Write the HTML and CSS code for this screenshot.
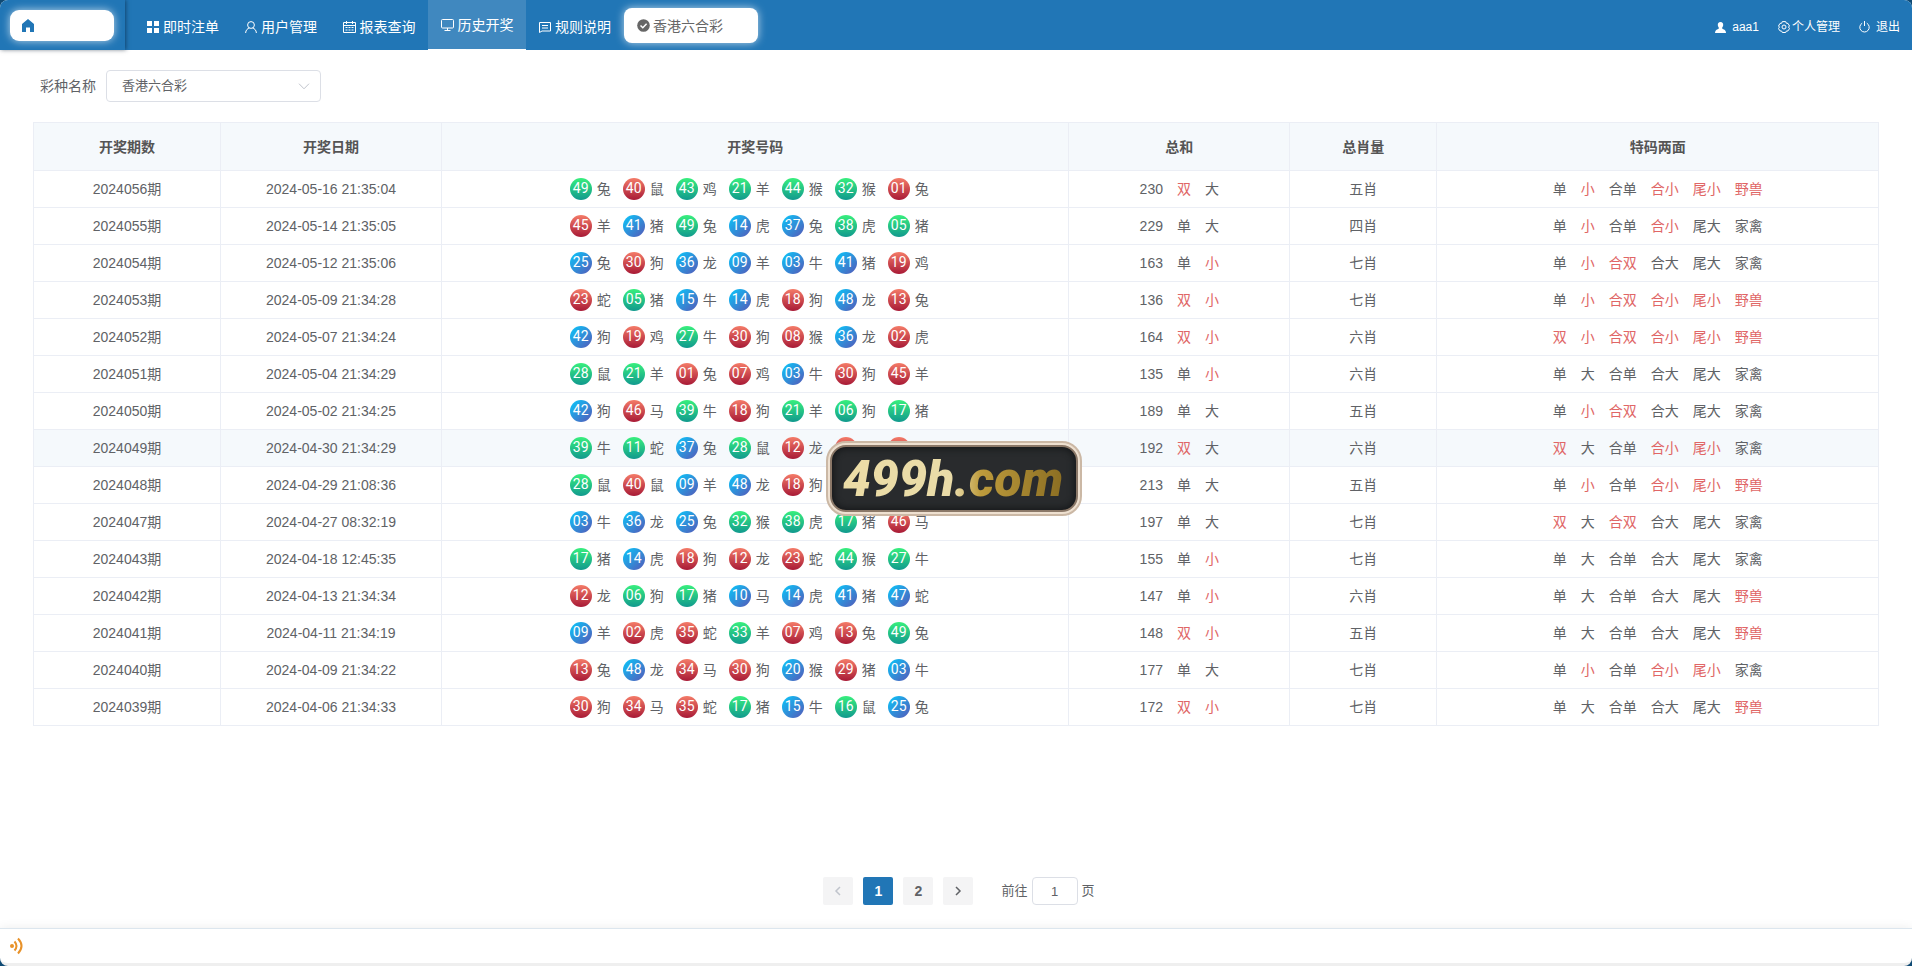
FILE: index.html
```
<!DOCTYPE html>
<html lang="zh-CN">
<head>
<meta charset="utf-8">
<title>历史开奖</title>
<link rel="stylesheet" href="styles.css">
</head>
<body>
<div class="app">
<header class="topbar">
  <div class="brand"><a class="home" href="#" aria-label="home"><svg width="14" height="14" viewBox="0 0 14 14"><path fill="#2176b6" d="M7 0 13 5V13H9V8.500H5V13H1V5Z"/></svg></a></div>
  <nav class="nav">
    <a href="#"><svg width="12" height="12" viewBox="0 0 12 12" fill="#fff"><path d="M0 0h5v5H0zM7 0h5v5H7zM0 7h5v5H0zM7 7h5v5H7z"/></svg>即时注单</a>
    <a href="#"><svg width="12" height="12" viewBox="0 0 12 12" fill="none" stroke="#fff"><circle cx="6" cy="4" r="3.400"/><path d="M.6 12C.8 9 2.600 7.400 4.500 7M11.400 12C11.200 9 9.400 7.400 7.500 7"/></svg>用户管理</a>
    <a href="#"><svg width="13" height="12" viewBox="0 0 13 12" fill="none" stroke="#fff"><path d="M.5 1.500h12v10H.5zM.5 4.500h12M3.500 0v3M9.500 0v3"/><path d="M2.500 6.500h8M2.500 9h8" stroke-dasharray="2 1"/></svg>报表查询</a>
    <a href="#" class="active"><svg width="13" height="12" viewBox="0 0 13 12" fill="none" stroke="#fff"><rect x=".5" y=".5" width="12" height="8.500" rx="1"/><path d="M6.500 9v2M3.500 11.500h6"/></svg>历史开奖</a>
    <a href="#"><svg width="12" height="12" viewBox="0 0 12 12" fill="none" stroke="#fff"><path d="M.5 1.500h11v8.500H3L.5 11.500zM3 4.500h6M3 7h6"/></svg>规则说明</a>
  </nav>
  <button class="game" type="button"><svg width="13" height="13" viewBox="0 0 13 13"><circle cx="6.500" cy="6.500" r="6.300" fill="#666"/><path d="M3.500 6.500 5.800 8.700 9.600 4.800" fill="none" stroke="#fff" stroke-width="1.500"/></svg>香港六合彩</button>
  <div class="account">
    <a href="#"><svg width="11" height="11" viewBox="0 0 11 11" fill="#fff"><path d="M5.500 0C7.500 0 8.300 1.400 8.200 3 8.100 4.500 7.400 5.400 7 6 7 7.500 11 7 11 11H0C0 7 4 7.500 4 6 3.600 5.400 2.900 4.500 2.800 3 2.700 1.400 3.500 0 5.500 0Z"/></svg><span>aaa1</span></a>
    <a href="#" class="tight"><svg width="12" height="12" viewBox="0 0 12 12" fill="none" stroke="#fff"><path d="M4.300.6h3.400l.6 1.600 1.700.2 1.500 2.600-1 1 1 1.600-1.500 2.300-1.700.2-.6 1.400H4.300l-.6-1.400L2 9.900.5 7.600l1-1.600-1-1L2 2.400l1.700-.2z"/><circle cx="6" cy="6" r="2"/></svg><span>个人管理</span></a>
    <a href="#"><svg width="11" height="12" viewBox="0 0 11 12" fill="none" stroke="#fff"><path d="M3.200 2.200a4.700 4.700 0 1 0 4.600 0M5.500 0v5"/></svg><span>退出</span></a>
  </div>
</header>

<main class="content">
  <form class="filter">
    <label for="lottery">彩种名称</label>
    <span class="picker"><select id="lottery"><option>香港六合彩</option></select><svg width="12" height="7" viewBox="0 0 12 7" fill="none" stroke="#c0c4cc"><path d="M1 .7 6 5.800 11 .7"/></svg></span>
  </form>

  <table class="draws">
    <colgroup><col class="c-issue"><col class="c-date"><col class="c-balls"><col class="c-sum"><col class="c-zodiac"><col class="c-special"></colgroup>
    <thead><tr><th>开奖期数</th><th>开奖日期</th><th>开奖号码</th><th>总和</th><th>总肖量</th><th>特码两面</th></tr></thead>
    <tbody>
<tr><td>2024056期</td><td>2024-05-16 21:35:04</td><td><ul class="balls"><li><b class="g">49</b>兔</li><li><b class="r">40</b>鼠</li><li><b class="g">43</b>鸡</li><li><b class="g">21</b>羊</li><li><b class="g">44</b>猴</li><li><b class="g">32</b>猴</li><li><b class="r">01</b>兔</li></ul></td><td><p class="marks"><span>230</span><em>双</em><span>大</span></p></td><td>五肖</td><td><p class="marks"><span>单</span><em>小</em><span>合单</span><em>合小</em><em>尾小</em><em>野兽</em></p></td></tr>
<tr><td>2024055期</td><td>2024-05-14 21:35:05</td><td><ul class="balls"><li><b class="r">45</b>羊</li><li><b class="b">41</b>猪</li><li><b class="g">49</b>兔</li><li><b class="b">14</b>虎</li><li><b class="b">37</b>兔</li><li><b class="g">38</b>虎</li><li><b class="g">05</b>猪</li></ul></td><td><p class="marks"><span>229</span><span>单</span><span>大</span></p></td><td>四肖</td><td><p class="marks"><span>单</span><em>小</em><span>合单</span><em>合小</em><span>尾大</span><span>家禽</span></p></td></tr>
<tr><td>2024054期</td><td>2024-05-12 21:35:06</td><td><ul class="balls"><li><b class="b">25</b>兔</li><li><b class="r">30</b>狗</li><li><b class="b">36</b>龙</li><li><b class="b">09</b>羊</li><li><b class="b">03</b>牛</li><li><b class="b">41</b>猪</li><li><b class="r">19</b>鸡</li></ul></td><td><p class="marks"><span>163</span><span>单</span><em>小</em></p></td><td>七肖</td><td><p class="marks"><span>单</span><em>小</em><em>合双</em><span>合大</span><span>尾大</span><span>家禽</span></p></td></tr>
<tr><td>2024053期</td><td>2024-05-09 21:34:28</td><td><ul class="balls"><li><b class="r">23</b>蛇</li><li><b class="g">05</b>猪</li><li><b class="b">15</b>牛</li><li><b class="b">14</b>虎</li><li><b class="r">18</b>狗</li><li><b class="b">48</b>龙</li><li><b class="r">13</b>兔</li></ul></td><td><p class="marks"><span>136</span><em>双</em><em>小</em></p></td><td>七肖</td><td><p class="marks"><span>单</span><em>小</em><em>合双</em><em>合小</em><em>尾小</em><em>野兽</em></p></td></tr>
<tr><td>2024052期</td><td>2024-05-07 21:34:24</td><td><ul class="balls"><li><b class="b">42</b>狗</li><li><b class="r">19</b>鸡</li><li><b class="g">27</b>牛</li><li><b class="r">30</b>狗</li><li><b class="r">08</b>猴</li><li><b class="b">36</b>龙</li><li><b class="r">02</b>虎</li></ul></td><td><p class="marks"><span>164</span><em>双</em><em>小</em></p></td><td>六肖</td><td><p class="marks"><em>双</em><em>小</em><em>合双</em><em>合小</em><em>尾小</em><em>野兽</em></p></td></tr>
<tr><td>2024051期</td><td>2024-05-04 21:34:29</td><td><ul class="balls"><li><b class="g">28</b>鼠</li><li><b class="g">21</b>羊</li><li><b class="r">01</b>兔</li><li><b class="r">07</b>鸡</li><li><b class="b">03</b>牛</li><li><b class="r">30</b>狗</li><li><b class="r">45</b>羊</li></ul></td><td><p class="marks"><span>135</span><span>单</span><em>小</em></p></td><td>六肖</td><td><p class="marks"><span>单</span><span>大</span><span>合单</span><span>合大</span><span>尾大</span><span>家禽</span></p></td></tr>
<tr><td>2024050期</td><td>2024-05-02 21:34:25</td><td><ul class="balls"><li><b class="b">42</b>狗</li><li><b class="r">46</b>马</li><li><b class="g">39</b>牛</li><li><b class="r">18</b>狗</li><li><b class="g">21</b>羊</li><li><b class="g">06</b>狗</li><li><b class="g">17</b>猪</li></ul></td><td><p class="marks"><span>189</span><span>单</span><span>大</span></p></td><td>五肖</td><td><p class="marks"><span>单</span><em>小</em><em>合双</em><span>合大</span><span>尾大</span><span>家禽</span></p></td></tr>
<tr class="hover"><td>2024049期</td><td>2024-04-30 21:34:29</td><td><ul class="balls"><li><b class="g">39</b>牛</li><li><b class="g">11</b>蛇</li><li><b class="b">37</b>兔</li><li><b class="g">28</b>鼠</li><li><b class="r">12</b>龙</li><li><b class="r"></b></li><li><b class="r"></b></li></ul></td><td><p class="marks"><span>192</span><em>双</em><span>大</span></p></td><td>六肖</td><td><p class="marks"><em>双</em><span>大</span><span>合单</span><em>合小</em><em>尾小</em><span>家禽</span></p></td></tr>
<tr><td>2024048期</td><td>2024-04-29 21:08:36</td><td><ul class="balls"><li><b class="g">28</b>鼠</li><li><b class="r">40</b>鼠</li><li><b class="b">09</b>羊</li><li><b class="b">48</b>龙</li><li><b class="r">18</b>狗</li><li></li><li></li></ul></td><td><p class="marks"><span>213</span><span>单</span><span>大</span></p></td><td>五肖</td><td><p class="marks"><span>单</span><em>小</em><span>合单</span><em>合小</em><em>尾小</em><em>野兽</em></p></td></tr>
<tr><td>2024047期</td><td>2024-04-27 08:32:19</td><td><ul class="balls"><li><b class="b">03</b>牛</li><li><b class="b">36</b>龙</li><li><b class="b">25</b>兔</li><li><b class="g">32</b>猴</li><li><b class="g">38</b>虎</li><li><b class="g">17</b>猪</li><li><b class="r">46</b>马</li></ul></td><td><p class="marks"><span>197</span><span>单</span><span>大</span></p></td><td>七肖</td><td><p class="marks"><em>双</em><span>大</span><em>合双</em><span>合大</span><span>尾大</span><span>家禽</span></p></td></tr>
<tr><td>2024043期</td><td>2024-04-18 12:45:35</td><td><ul class="balls"><li><b class="g">17</b>猪</li><li><b class="b">14</b>虎</li><li><b class="r">18</b>狗</li><li><b class="r">12</b>龙</li><li><b class="r">23</b>蛇</li><li><b class="g">44</b>猴</li><li><b class="g">27</b>牛</li></ul></td><td><p class="marks"><span>155</span><span>单</span><em>小</em></p></td><td>七肖</td><td><p class="marks"><span>单</span><span>大</span><span>合单</span><span>合大</span><span>尾大</span><span>家禽</span></p></td></tr>
<tr><td>2024042期</td><td>2024-04-13 21:34:34</td><td><ul class="balls"><li><b class="r">12</b>龙</li><li><b class="g">06</b>狗</li><li><b class="g">17</b>猪</li><li><b class="b">10</b>马</li><li><b class="b">14</b>虎</li><li><b class="b">41</b>猪</li><li><b class="b">47</b>蛇</li></ul></td><td><p class="marks"><span>147</span><span>单</span><em>小</em></p></td><td>六肖</td><td><p class="marks"><span>单</span><span>大</span><span>合单</span><span>合大</span><span>尾大</span><em>野兽</em></p></td></tr>
<tr><td>2024041期</td><td>2024-04-11 21:34:19</td><td><ul class="balls"><li><b class="b">09</b>羊</li><li><b class="r">02</b>虎</li><li><b class="r">35</b>蛇</li><li><b class="g">33</b>羊</li><li><b class="r">07</b>鸡</li><li><b class="r">13</b>兔</li><li><b class="g">49</b>兔</li></ul></td><td><p class="marks"><span>148</span><em>双</em><em>小</em></p></td><td>五肖</td><td><p class="marks"><span>单</span><span>大</span><span>合单</span><span>合大</span><span>尾大</span><em>野兽</em></p></td></tr>
<tr><td>2024040期</td><td>2024-04-09 21:34:22</td><td><ul class="balls"><li><b class="r">13</b>兔</li><li><b class="b">48</b>龙</li><li><b class="r">34</b>马</li><li><b class="r">30</b>狗</li><li><b class="b">20</b>猴</li><li><b class="r">29</b>猪</li><li><b class="b">03</b>牛</li></ul></td><td><p class="marks"><span>177</span><span>单</span><span>大</span></p></td><td>七肖</td><td><p class="marks"><span>单</span><em>小</em><span>合单</span><em>合小</em><em>尾小</em><span>家禽</span></p></td></tr>
<tr><td>2024039期</td><td>2024-04-06 21:34:33</td><td><ul class="balls"><li><b class="r">30</b>狗</li><li><b class="r">34</b>马</li><li><b class="r">35</b>蛇</li><li><b class="g">17</b>猪</li><li><b class="b">15</b>牛</li><li><b class="g">16</b>鼠</li><li><b class="b">25</b>兔</li></ul></td><td><p class="marks"><span>172</span><em>双</em><em>小</em></p></td><td>七肖</td><td><p class="marks"><span>单</span><span>大</span><span>合单</span><span>合大</span><span>尾大</span><em>野兽</em></p></td></tr>
    </tbody>
  </table>

  <div class="pager">
    <button type="button" aria-label="上一页" disabled><svg width="8" height="10" viewBox="0 0 8 10" fill="none" stroke="#c0c4cc" stroke-width="1.500"><path d="M6 1 2 5l4 4"/></svg></button>
    <button type="button" class="current">1</button>
    <button type="button">2</button>
    <button type="button" aria-label="下一页"><svg width="8" height="10" viewBox="0 0 8 10" fill="none" stroke="#606266" stroke-width="1.500"><path d="M2 1 6 5 2 9"/></svg></button>
    <label class="jump">前往<input type="text" value="1">页</label>
  </div>
</main>

<footer class="notice"><svg width="15" height="18" viewBox="0 0 15 18" fill="none" stroke="#e8922a" stroke-width="2"><circle cx="3" cy="9" r="2" fill="#e8922a" stroke="none"/><path d="M5.500 4.500Q9.500 9 5.500 13.500M9 1.500Q16 9 9 16.500"/></svg></footer>
<div class="stamp"><span>499h.com</span></div>
</div>
</body>
</html>
```
FILE: styles.css
```
* { box-sizing: border-box; }
body {
  margin: 0;
  background: #0f4a74;
  color: #606266;
  font: 14px/20px "Liberation Sans", "Noto Sans CJK SC", sans-serif;
}
a { color: inherit; text-decoration: none; }
svg { flex: none; display: block; }
button, input, select { font: inherit; color: inherit; }

.app {
  position: relative;
  display: flex;
  flex-direction: column;
  min-height: 100vh;
  background: #fff;
  border-bottom: 3px solid #efefef;
  border-radius: 8px;
  overflow: hidden;
}

.topbar {
  display: flex;
  align-items: flex-start;
  height: 50px;
  background: #2176b6;
  color: #fff;
}
.brand {
  width: 125px;
  height: 50px;
  padding: 10px;
  box-shadow: 1px 0 4px rgba(0, 21, 41, .5);
}
.home {
  display: flex;
  align-items: center;
  width: 104px;
  height: 31px;
  padding-left: 11px;
  background: #fff;
  border-radius: 9px;
  box-shadow: 0 0 8px rgba(255, 255, 255, .7);
}
.nav { display: flex; margin-left: 9px; }
.nav a {
  display: flex;
  align-items: center;
  justify-content: center;
  gap: 4px;
  width: 98px;
  height: 49px;
  padding-top: 4px;
}
.nav .active { padding: 0; background: #4088bf; box-shadow: 0 1px #fff; }
.game {
  display: flex;
  align-items: center;
  gap: 3px;
  width: 134px;
  height: 35px;
  margin-top: 8px;
  padding: 0 13px;
  border: 0;
  border-radius: 8px;
  background: #fff;
  color: #666;
  box-shadow: 0 0 8px rgba(255, 255, 255, .7);
}
.account {
  display: flex;
  gap: 19px;
  margin-left: auto;
  padding: 17px 12px 0 0;
  font-size: 12px;
}
.account a { display: flex; align-items: center; gap: 6px; }
.account .tight { gap: 2px; }

.content { flex: 1; display: flex; flex-direction: column; padding: 20px 33px 23px; }
.filter { display: flex; align-items: center; gap: 10px; margin: 0 0 20px 7px; }
.picker { display: grid; align-items: center; width: 215px; }
.picker select, .picker svg { grid-area: 1 / 1; }
.picker svg { justify-self: end; margin-right: 11px; pointer-events: none; }
.picker select {
  appearance: none;
  height: 32px;
  padding: 0 15px;
  border: 1px solid #dcdfe6;
  border-radius: 4px;
  background: #fff;
  font-size: 13px;
}

.draws {
  width: 100%;
  table-layout: fixed;
  border-collapse: collapse;
  text-align: center;
}
.c-issue { width: 187px; }
.c-date, .c-sum { width: 221px; }
.c-balls { width: 34%; }
.c-zodiac { width: 147px; }
.draws th, .draws td { padding: 0; border: 1px solid #ebeef5; }
.draws th { height: 48px; background: #f5f9fc; color: #555; }
.draws td { height: 37px; }
.draws .hover { background: #f5f9fc; }
.balls, .marks { display: flex; justify-content: center; margin: 0; padding: 0; list-style: none; }
.balls li { display: flex; align-items: center; gap: 5px; width: 53px; }
.balls b {
  width: 22px;
  height: 22px;
  border-radius: 50%;
  color: #fff;
  font: 400 14px/21px Roboto, sans-serif;
}
.r { background: linear-gradient(#f47b68, #a81a36); }
.g { background: linear-gradient(#38ef7d, #11998e); }
.b { background: linear-gradient(135deg, #08c8fb, #5658b8); }
.marks { gap: 14px; }
.marks em { color: #e06666; font-style: normal; }

.pager { display: flex; justify-content: center; gap: 10px; margin-top: auto; padding-left: 6px; font-size: 13px; }
.pager button {
  display: grid;
  place-items: center;
  width: 30px;
  height: 28px;
  padding: 0;
  border: 0;
  border-radius: 2px;
  background: #f4f4f5;
  font-size: 14px;
  font-weight: 700;
}
.pager .current { background: #2176b6; color: #fff; }
.jump { display: flex; align-items: center; gap: 4px; margin-left: 18px; }
.jump input {
  width: 46px;
  height: 28px;
  border: 1px solid #dcdfe6;
  border-radius: 4px;
  text-align: center;
}

.notice {
  height: 35px;
  padding: 8px 9px;
  border-top: 1px solid #dce6ee;
  box-shadow: 0 0 10px rgba(0, 0, 0, .08);
}

/* Floating badge over the table */
.stamp {
  position: absolute;
  top: 441px;
  left: 50%;
  width: 256px;
  height: 75px;
  margin-left: -130px;
  border: 3px solid #cbb8a5;
  outline: 2px solid #eee0d0;
  outline-offset: -4px;
  border-radius: 20px;
  background: #292b2d;
  box-shadow: inset 0 0 0 3px #8b7868, inset 0 0 6px 5px #17191b;
  font: italic 900 50px/70px Roboto, sans-serif;
  text-align: center;
}
.stamp span {
  padding-right: 2px;
  background: linear-gradient(90deg, #ecdca6, #e9dba8 50%, #bd9b3c 62%, #8a6d22);
  background-clip: text;
  color: transparent;
}
```
